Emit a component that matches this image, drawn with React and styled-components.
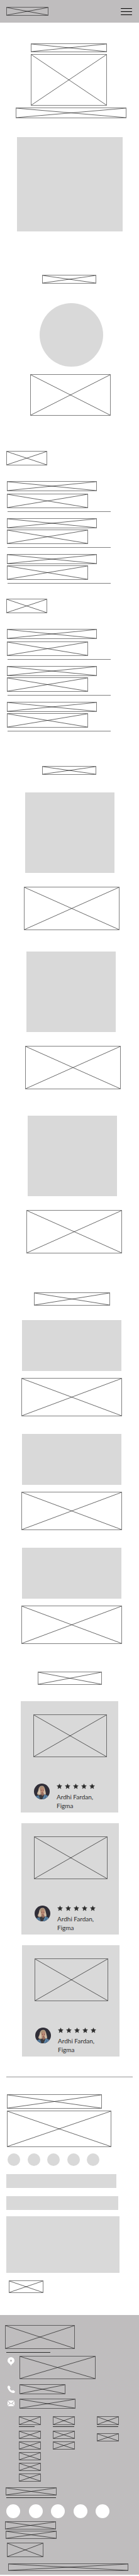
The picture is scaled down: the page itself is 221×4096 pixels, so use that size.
import React from "react";
import styled, { createGlobalStyle } from "styled-components";

const color = {
  bar: "#bfbdbe",
  block: "#d9d9d9",
  ink: "#2d2d2d",
  outline: "rgba(0, 0, 0, 0.5)",
};

const GlobalStyle = createGlobalStyle`
  *, *::before, *::after { box-sizing: border-box; }
  body {
    margin: 0;
    background: #fff;
    color: ${color.ink};
    font-family: Lato, "Liberation Sans", sans-serif;
  }
  h1, h2, h3, p, ul, figure { margin: 0; padding: 0; }
  ul { list-style: none; }
  button { padding: 0; border: 0; background: none; cursor: pointer; }
`;

/* Crossed frame that stands for copy or a heading */
const Frame = styled.span`
  display: block;
  border: 1px solid ${color.outline};
  svg {
    display: block;
    width: 100%;
    height: 100%;
  }
  line {
    stroke: #000;
    stroke-opacity: 0.6;
    stroke-width: 1;
  }
`;

function Wire({ className }) {
  return (
    <Frame className={className}>
      <svg aria-hidden="true">
        <line x1="0" y1="0" x2="100%" y2="100%" />
        <line x1="0" y1="100%" x2="100%" y2="0" />
      </svg>
    </Frame>
  );
}

/* Header */
const Header = styled.header`
  display: flex;
  align-items: center;
  justify-content: space-between;
  height: 36px;
  padding: 0 11px 0 10px;
  background: ${color.bar};
`;
const Logo = styled(Wire)`
  width: 67px;
  height: 14px;
`;
const MenuButton = styled.button`
  display: flex;
  flex-direction: column;
  gap: 4px;
  width: 18px;
`;
const MenuBar = styled.span`
  height: 1px;
  border-radius: 1px;
  background: #000;
`;

/* Hero */
const Hero = styled.section`
  display: flex;
  flex-direction: column;
  gap: 3px;
  padding-top: 33px;
`;
const HeroTitle = styled(Wire)`
  height: 14px;
  margin: 0 51px 0 49px;
`;
const HeroText = styled(Wire)`
  height: 82px;
  margin: 0 51px 0 49px;
`;
const HeroActions = styled(Wire)`
  height: 17px;
  margin: 0 20px 0 25px;
`;
const HeroImage = styled.div`
  height: 150px;
  margin: 27px 26px 0 27px;
  background: ${color.block};
`;

/* Headings */
const Heading = styled.h2`
  padding: ${(p) => p.$top}px 68px ${(p) => p.$bottom}px 67px;
`;
const HeadingWire = styled(Wire)`
  height: 14px;
`;
const WideHeading = styled(Heading)`
  padding-left: ${(p) => p.$left}px;
  padding-right: ${(p) => p.$right}px;
`;
const TallHeadingWire = styled(Wire)`
  height: 21px;
`;

/* About */
const Portrait = styled.div`
  aspect-ratio: 1;
  margin: 0 57px 0 63px;
  border-radius: 50%;
  background: ${color.block};
`;
const AboutText = styled(Wire)`
  height: 66px;
  margin: 12px 45px 0 48px;
`;

/* Experience */
const Timeline = styled.section`
  display: flex;
  flex-direction: column;
  gap: 24px;
  padding-top: 56px;
`;
const GroupTitle = styled(Wire)`
  width: 65px;
  height: 23px;
  margin: 0 0 25px 10px;
`;
const Entries = styled.ul`
  display: flex;
  flex-direction: column;
  gap: 10px;
`;
const Entry = styled.li`
  display: flex;
  flex-direction: column;
  gap: 2px;
  border: 0;
  &:first-child { gap: 4px; }
`;
const EntryTitle = styled(Wire)`
  height: 16px;
  margin: 0 67px 0 11px;
`;
const EntryText = styled(Wire)`
  height: 23px;
  margin: 0 81px 0 11px;
`;
const EntryBody = styled.div`
  display: flex;
  flex-direction: column;
  gap: 5px;
`;
const EntryRule = styled.div`
  height: 1px;
  margin: 0 45px 0 12px;
  background: #808080;
`;

/* Services: each card steps a little further right than the last */
const Service = styled.article`
  padding: 0 ${(p) => 31 - p.$step * 2}px ${(p) => p.$after}px ${(p) => 38 + p.$step * 2}px;
`;
const ServiceImage = styled.div`
  height: 128px;
  margin: 0 8px 22px 2px;
  background: ${color.block};
`;
const ServiceText = styled(Wire)`
  height: 69px;
`;

/* Projects */
const Projects = styled.div`
  display: flex;
  flex-direction: column;
  gap: 28px;
  padding: 0 27px 0 34px;
`;
const ProjectImage = styled.div`
  height: 81px;
  margin: 0 1px 11px;
  background: ${color.block};
`;
const ProjectText = styled(Wire)`
  height: 61px;
`;

/* Testimonials */
const Reviews = styled.div`
  display: flex;
  flex-direction: column;
  gap: 17px;
`;
const Review = styled.article`
  margin: 0 ${(p) => 33 - p.$step}px 0 ${(p) => 33 + p.$step}px;
  padding: 21px 18px 4px 20px;
  background: ${color.block};
`;
const ReviewText = styled(Wire)`
  height: 68px;
  margin-bottom: 42px;
`;
const Reviewer = styled.div`
  display: flex;
  gap: 11px;
  padding-left: 1px;
`;
const AvatarSvg = styled.svg`
  flex: none;
  display: block;
  width: 25px;
  height: 25px;
`;
const Stars = styled.div`
  display: flex;
  gap: 4px;
  margin-bottom: 5px;
  svg {
    display: block;
    width: 9px;
    height: 9px;
    fill: ${color.ink};
    stroke: ${color.ink};
  }
`;
const ReviewerName = styled.p`
  font-size: 10px;
  line-height: 14px;
  white-space: nowrap;
`;

/* Contact */
const Rule = styled.hr`
  height: 1px;
  margin: 32px 10px 27px;
  border: 0;
  background: #969696;
`;
const ContactTitle = styled(Wire)`
  height: 23px;
  margin: 0 59px 3px 11px;
`;
const ContactText = styled(Wire)`
  height: 58px;
  margin: 0 44px 10px 11px;
`;
const DotRow = styled.div`
  display: flex;
  justify-content: space-between;
  padding: 0 63px 13px 12px;
`;
const Dot = styled.a`
  width: ${(p) => p.$size}px;
  height: ${(p) => p.$size}px;
  border-radius: 50%;
  background: ${(p) => p.$fill};
`;
const Form = styled.form`
  display: flex;
  flex-direction: column;
  padding: 0 31px 35px 10px;
`;
const Field = styled.div`
  display: flex;
  padding-right: ${(p) => p.$inset}px;
  margin-bottom: ${(p) => p.$after}px;
`;
const Input = styled.input`
  width: 100%;
  height: 22px;
  padding: 0 6px;
  border: 0;
  border-radius: 0;
  background: ${color.block};
  font: 10px/14px Lato, sans-serif;
`;
const Message = styled.textarea`
  width: 100%;
  height: 90px;
  padding: 6px;
  border: 0;
  border-radius: 0;
  background: ${color.block};
  font: 10px/14px Lato, sans-serif;
  resize: none;
`;
const Submit = styled.button`
  width: 55px;
  margin-left: 4px;
`;
const SubmitWire = styled(Wire)`
  height: 20px;
`;

/* Footer */
const Footer = styled.footer`
  padding: 16px 0 6px;
  background: ${color.bar};
`;
const FooterTitle = styled(Wire)`
  width: 111px;
  height: 38px;
  margin-left: 8px;
`;
const Underline = styled.div`
  width: ${(p) => p.$width}px;
  height: 1px;
  background: ${color.ink};
`;
const TitleUnderline = styled(Underline)`
  margin: 5px 0 5px 10px;
`;
const ContactList = styled.ul`
  padding-left: 12px;
`;
const ContactItem = styled.li`
  display: flex;
  gap: 7px;
  margin-bottom: ${(p) => p.$after}px;
`;
const IconSlot = styled.span`
  flex: none;
  width: 12px;
  padding-top: 2px;
  svg {
    display: block;
    fill: #fff;
  }
`;
const ContactWire = styled(Wire)`
  width: ${(p) => p.$width}px;
  height: ${(p) => p.$height}px;
`;
const FooterNav = styled.nav`
  display: grid;
  grid-template-columns: 54px 70px 1fr;
  padding-left: 30px;
  margin-bottom: 9px;
`;
const NavTitle = styled(Wire)`
  width: 35px;
  height: 14px;
  margin-bottom: 2px;
`;
const NavLinks = styled.ul`
  display: flex;
  flex-direction: column;
  gap: 4px;
  padding-top: ${(p) => p.$top}px;
`;
const NavLink = styled.a`
  display: block;
  width: 35px;
`;
const NavWire = styled(Wire)`
  height: 13px;
`;
const SocialTitle = styled(Wire)`
  width: 81px;
  height: 13px;
  margin-left: 9px;
`;
const SocialUnderline = styled(Underline)`
  margin: 3px 0 10px 10px;
`;
const SocialRow = styled.div`
  display: flex;
  justify-content: space-between;
  padding: 0 47px 5px 10px;
`;
const Address = styled(Wire)`
  width: 81px;
  height: 13px;
  margin: 0 0 2px ${(p) => p.$left}px;
`;
const Badge = styled(Wire)`
  width: 58px;
  height: 23px;
  margin: 6px 0 10px 11px;
`;
const Copyright = styled(Wire)`
  height: 12px;
  margin: 0 17px 0 13px;
`;

function Star() {
  return (
    <svg viewBox="0 0 18 18" aria-hidden="true">
      <path
        strokeLinejoin="round"
        d="M9 1.2l2.2 5 5.6.5-4.2 3.8 1.3 5.7L9 13.2l-4.9 3 1.3-5.7L1.2 6.7l5.6-.5z"
      />
    </svg>
  );
}

function Avatar({ id }) {
  return (
    <AvatarSvg viewBox="0 0 50 50" role="img" aria-label="Ardhi Fardan">
      <clipPath id={id}>
        <circle cx="25" cy="25" r="25" />
      </clipPath>
      <g clipPath={`url(#${id})`}>
        <rect width="50" height="50" fill="#302e38" />
        <path d="M25 7c-7 0-10 6-11 13-1 6-5 9-4 13 2 4 8 5 13 5h9c4 0 7-3 6-8-1-4-2-8-3-12C34 11 31 7 25 7z" fill="#b09a86" />
        <path d="M19 12c-4 5-4 13-7 19 3 3 6 3 8 2zM32 14c3 6 3 11 4 17-1 3-3 4-5 4z" fill="#d6c4ae" />
        <path d="M20 18c0-4 3-6 6-6s6 3 6 8-2 11-6 12c-4 0-6-7-6-14z" fill="#bd8a76" />
        <path d="M19 20c3-1 5-4 7-8l6 5c-1-6-4-8-8-8-5 1-7 5-5 11z" fill="#a88d74" />
        <path d="M21 21h4M28 21h3M24 28h4" stroke="#573b38" strokeWidth="1.4" />
        <path d="M23 31l7-1 3 6-6 7-7-5z" fill="#94695c" />
        <path d="M14 38l8-3 5 4 6-4 6 15H12z" fill="#3b3b40" />
        <path d="M6 40l9-3 5 13H6zM34 34l9 4 6 12H26z" fill="#4f7598" />
        <path d="M35 36l-5 13M41 38l-2 12" stroke="#7fa3c2" strokeWidth="1.4" />
      </g>
    </AvatarSvg>
  );
}

const entries = [0, 1, 2];
const dots = ["one", "two", "three", "four", "five"];
const services = [
  { step: 0, after: 34 },
  { step: 1, after: 42 },
  { step: 2, after: 0 },
];
const navColumns = [
  { rule: 25, links: 5, top: 6, indent: 0 },
  { rule: 34, links: 2, top: 6, indent: 0 },
  { rule: 34, links: 1, top: 10, indent: 0 },
];

export default function App() {
  return (
    <>
      <GlobalStyle />
      <Header>
        <Logo />
        <MenuButton type="button" aria-label="Menu">
          <MenuBar />
          <MenuBar />
          <MenuBar />
        </MenuButton>
      </Header>

      <main>
        <Hero>
          <HeroTitle />
          <HeroText />
          <HeroActions />
          <HeroImage />
        </Hero>

        <section>
          <Heading $top={69} $bottom={31}>
            <HeadingWire />
          </Heading>
          <Portrait />
          <AboutText />
        </section>

        <Timeline>
          {[0, 1].map((group) => (
            <div key={group}>
              <GroupTitle />
              <Entries>
                {entries.map((n) => (
                  <Entry key={n}>
                    <EntryTitle />
                    <EntryBody>
                      <EntryText />
                      <EntryRule />
                    </EntryBody>
                  </Entry>
                ))}
              </Entries>
            </div>
          ))}
        </Timeline>

        <section>
          <Heading $top={55} $bottom={28}>
            <HeadingWire />
          </Heading>
          {services.map((s) => (
            <Service key={s.step} $step={s.step} $after={s.after}>
              <ServiceImage />
              <ServiceText />
            </Service>
          ))}
        </section>

        <section>
          <WideHeading $top={62} $bottom={23} $left={54} $right={46}>
            <TallHeadingWire />
          </WideHeading>
          <Projects>
            {[0, 1, 2].map((n) => (
              <article key={n}>
                <ProjectImage />
                <ProjectText />
              </article>
            ))}
          </Projects>
        </section>

        <section>
          <WideHeading $top={44} $bottom={26} $left={60} $right={59}>
            <TallHeadingWire />
          </WideHeading>
          <Reviews>
            {[0, 1, 2].map((n) => (
              <Review key={n} $step={n}>
                <ReviewText />
                <Reviewer>
                  <Avatar id={`avatar-${n}`} />
                  <div>
                    <Stars>
                      {dots.map((d) => (
                        <Star key={d} />
                      ))}
                    </Stars>
                    <ReviewerName>
                      Ardhi Fardan,
                      <br />
                      Figma
                    </ReviewerName>
                  </div>
                </Reviewer>
              </Review>
            ))}
          </Reviews>
        </section>

        <Rule />

        <section>
          <ContactTitle />
          <ContactText />
          <DotRow>
            {dots.map((d) => (
              <Dot key={d} href="#contact" aria-label={`Channel ${d}`} $size={20} $fill={color.block} />
            ))}
          </DotRow>
          <Form id="contact">
            <Field $inset={5} $after={13}>
              <Input type="text" aria-label="Name" />
            </Field>
            <Field $inset={2} $after={10}>
              <Input type="email" aria-label="Email" />
            </Field>
            <Field $inset={0} $after={12}>
              <Message aria-label="Message" />
            </Field>
            <Submit type="button" aria-label="Send">
              <SubmitWire />
            </Submit>
          </Form>
        </section>
      </main>

      <Footer>
        <FooterTitle />
        <TitleUnderline $width={70} />
        <ContactList>
          <ContactItem $after={8}>
            <IconSlot>
              <svg width="11" height="14" viewBox="0 0 22 28" aria-hidden="true">
                <path
                  fillRule="evenodd"
                  d="M11 0a11 11 0 0 1 11 11c0 5-3.500 8-7 10.500-2 1.500-3 3.500-4 6.500-1-3-2-5-4-6.500C3.500 19 0 16 0 11A11 11 0 0 1 11 0zm0 8a3.200 3.200 0 1 0 0 6.400A3.200 3.200 0 0 0 11 8z"
                />
              </svg>
            </IconSlot>
            <ContactWire $width={121} $height={37} />
          </ContactItem>
          <ContactItem $after={7}>
            <IconSlot>
              <svg width="12" height="12" viewBox="0 0 24 24" aria-hidden="true">
                <path d="M1.500 1.500C3 0 5 0 6 1.500L8.500 5c.8 1.300.4 2.400-.5 3.300-1 1-.8 1.700.2 3.200 1.200 1.700 2.600 3.100 4.300 4.300 1.500 1 2.200 1.200 3.200.2.900-.9 2-1.300 3.300-.5l3.500 2.500c1.500 1 1.500 3 0 4.500-2 2-5 2-8.500.5C8 20.500 3.500 16 1 10-.5 6.500-.5 3.500 1.500 1.500z" />
              </svg>
            </IconSlot>
            <ContactWire $width={73} $height={16} />
          </ContactItem>
          <ContactItem $after={12}>
            <IconSlot>
              <svg width="11" height="11" viewBox="0 0 22 22" aria-hidden="true">
                <path d="M1 2h20l-8.500 8.500c-1 .9-2 .9-3 0zM0 4l6.500 7L0 18zM22 4v14l-6.500-7zM7.800 12.200c2 2 4.400 2 6.400 0L21 20H1z" />
              </svg>
            </IconSlot>
            <ContactWire $width={89} $height={16} />
          </ContactItem>
        </ContactList>

        <FooterNav>
          {navColumns.map((col, i) => (
            <div key={i}>
              <NavTitle />
              <Underline $width={col.rule} />
              <NavLinks $top={col.top}>
                {dots.slice(0, col.links).map((d) => (
                  <li key={d}>
                    <NavLink href="#" aria-label={`Link ${d}`}>
                      <NavWire />
                    </NavLink>
                  </li>
                ))}
              </NavLinks>
            </div>
          ))}
        </FooterNav>

        <SocialTitle />
        <SocialUnderline $width={79} />
        <SocialRow>
          {dots.map((d) => (
            <Dot key={d} href="#" aria-label={`Social ${d}`} $size={22} $fill="#fff" />
          ))}
        </SocialRow>
        <Address $left={8} />
        <Address $left={9} />
        <Badge />
        <Copyright />
      </Footer>
    </>
  );
}
